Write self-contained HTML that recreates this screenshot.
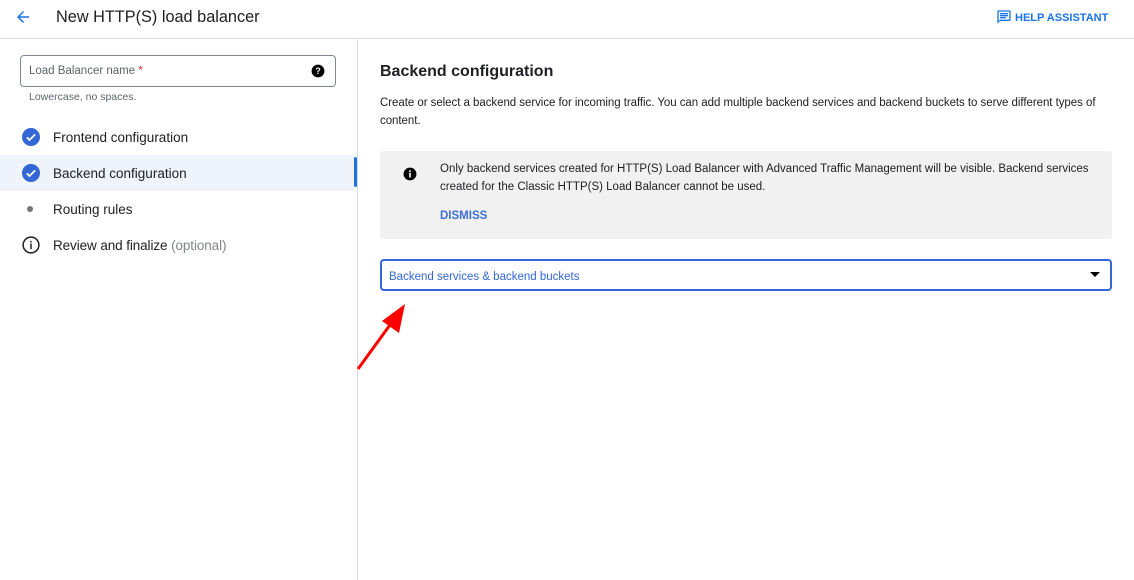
<!DOCTYPE html>
<html><head><style>
body{margin:0;width:1134px;height:580px;overflow:hidden;background:#fff;font-family:"Liberation Sans",Arial,sans-serif;color:#202124;position:relative}
.a{position:absolute}
</style></head><body>
<svg class="a" style="left:14px;top:8px" width="18" height="18" viewBox="0 0 24 24"><path d="M20 11H7.8l5.6-5.6L12 4l-8 8 8 8 1.4-1.4L7.8 13H20z" fill="#1a73e8"/></svg>
<div class="a" style="left:56px;top:6px;font-size:16.3px;line-height:22px">New HTTP(S) load balancer</div>
<svg class="a" style="left:996px;top:9px" width="16" height="16" viewBox="0 0 24 24"><path d="M20 2H4c-1.1 0-2 .9-2 2v18l4-4h14c1.1 0 2-.9 2-2V4c0-1.1-.9-2-2-2zm0 14H6l-2 2V4h16v12zM6 6h12v2H6zm0 3h12v2H6zm0 3h9v2H6z" fill="#1a73e8"/></svg>
<div class="a" style="left:1015px;top:11px;font-size:11px;font-weight:bold;color:#1a73e8;line-height:14px">HELP ASSISTANT</div>
<div class="a" style="left:0;top:38px;width:1134px;height:1px;background:#dadce0"></div>
<div class="a" style="left:357px;top:39px;width:1px;height:541px;background:#dadce0"></div>

<div class="a" style="left:20px;top:55px;width:314px;height:30px;border:1px solid #80868b;border-radius:4px"></div>
<div class="a" style="left:29px;top:65px;font-size:11.5px;color:#5f6368">Load Balancer name <span style="color:#d93025">*</span></div>
<svg class="a" style="left:311px;top:64px" width="14" height="14" viewBox="0 0 24 24"><circle cx="12" cy="12" r="11" fill="#000"/><text x="12" y="17" font-size="15" font-weight="bold" fill="#fff" text-anchor="middle" font-family="Liberation Sans">?</text></svg>
<div class="a" style="left:29px;top:91px;font-size:10.5px;color:#5f6368">Lowercase, no spaces.</div>

<div class="a" style="left:0;top:155px;width:354px;height:36px;background:#eef3fc"></div>
<div class="a" style="left:354px;top:157px;width:3px;height:30px;background:#1a73e8;border-radius:2px"></div>
<svg class="a" style="left:22px;top:128px" width="18" height="18" viewBox="0 0 24 24"><circle cx="12" cy="12" r="12" fill="#3367d6"/><path d="M6.5 12.5l3.5 3.5 7.5-7.5" stroke="#fff" stroke-width="2.4" fill="none"/></svg>
<div class="a" style="left:53px;top:130px;font-size:13.5px">Frontend configuration</div>
<svg class="a" style="left:22px;top:164px" width="18" height="18" viewBox="0 0 24 24"><circle cx="12" cy="12" r="12" fill="#3367d6"/><path d="M6.5 12.5l3.5 3.5 7.5-7.5" stroke="#fff" stroke-width="2.4" fill="none"/></svg>
<div class="a" style="left:53px;top:166px;font-size:13.5px">Backend configuration</div>
<div class="a" style="left:27px;top:206px;width:6px;height:6px;border-radius:50%;background:#757575"></div>
<div class="a" style="left:53px;top:202px;font-size:13.5px">Routing rules</div>
<svg class="a" style="left:22px;top:236px" width="18" height="18" viewBox="0 0 24 24"><circle cx="12" cy="12" r="10.5" fill="none" stroke="#202124" stroke-width="2"/><rect x="11" y="10" width="2" height="7.5" fill="#202124"/><rect x="11" y="6.5" width="2" height="2" fill="#202124"/></svg>
<div class="a" style="left:53px;top:238px;font-size:13.5px;letter-spacing:-0.1px">Review and finalize <span style="color:#80868b">(optional)</span></div>

<div class="a" style="left:380px;top:62px;font-size:16px;font-weight:bold;line-height:20px">Backend configuration</div>
<div class="a" style="left:380px;top:94px;width:730px;font-size:11.5px;line-height:18px;letter-spacing:-0.05px">Create or select a backend service for incoming traffic. You can add multiple backend services and backend buckets to serve different types of content.</div>

<div class="a" style="left:380px;top:151px;width:732px;height:88px;background:#f1f1f1;border-radius:3px"></div>
<svg class="a" style="left:403px;top:167px" width="14" height="14" viewBox="0 0 24 24"><circle cx="12" cy="12" r="11" fill="#000"/><rect x="10.6" y="10" width="2.8" height="8" fill="#fff"/><circle cx="12" cy="7" r="1.6" fill="#fff"/></svg>
<div class="a" style="left:440px;top:160px;width:664px;font-size:11.5px;line-height:18px">Only backend services created for HTTP(S) Load Balancer with Advanced Traffic Management will be visible. Backend services created for the Classic HTTP(S) Load Balancer cannot be used.</div>
<div class="a" style="left:440px;top:210px;font-size:11.5px;font-weight:bold;color:#3c6fd6">DISMISS</div>

<div class="a" style="left:380px;top:259px;width:728px;height:28px;border:2px solid #3367d6;border-radius:4px"></div>
<div class="a" style="left:389px;top:271px;font-size:11.5px;color:#3367d6">Backend services &amp; backend buckets</div>
<div class="a" style="left:1090px;top:272px;width:0;height:0;border-left:5px solid transparent;border-right:5px solid transparent;border-top:5px solid #000"></div>

<svg class="a" style="left:355px;top:300px" width="55" height="75"><line x1="3" y1="69" x2="40" y2="18" stroke="#f00" stroke-width="3"/><polygon points="50,4 44,33 27,21" fill="#f00"/></svg>
</body></html>
